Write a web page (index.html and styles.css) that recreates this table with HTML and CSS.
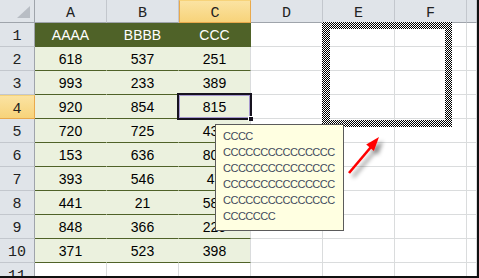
FILE: index.html
```html
<!DOCTYPE html>
<html>
<head>
  <meta charset="utf-8">
  <title>Sheet1</title>
  <link rel="stylesheet" href="styles.css">
</head>
<body>
<div class="sheet">
  <!-- column headers -->
  <div class="row head">
    <div class="cell corner"></div>
    <div class="cell ch">A</div>
    <div class="cell ch">B</div>
    <div class="cell ch on">C</div>
    <div class="cell ch">D</div>
    <div class="cell ch">E</div>
    <div class="cell ch">F</div>
    <div class="cell ch"></div>
  </div>
  <div class="row">
    <div class="cell rh">1</div>
    <div class="cell top">AAAA</div>
    <div class="cell top">BBBB</div>
    <div class="cell top">CCC</div>
    <div class="cell"></div><div class="cell"></div><div class="cell"></div><div class="cell"></div>
  </div>
  <div class="row">
    <div class="cell rh">2</div>
    <div class="cell data">618</div>
    <div class="cell data">537</div>
    <div class="cell data last">251</div>
    <div class="cell"></div><div class="cell"></div><div class="cell"></div><div class="cell"></div>
  </div>
  <div class="row">
    <div class="cell rh">3</div>
    <div class="cell data">993</div>
    <div class="cell data">233</div>
    <div class="cell data last">389</div>
    <div class="cell"></div><div class="cell"></div><div class="cell"></div><div class="cell"></div>
  </div>
  <div class="row">
    <div class="cell rh on">4</div>
    <div class="cell data">920</div>
    <div class="cell data">854</div>
    <div class="cell data last sel">815</div>
    <div class="cell"></div><div class="cell"></div><div class="cell"></div><div class="cell"></div>
  </div>
  <div class="row">
    <div class="cell rh">5</div>
    <div class="cell data">720</div>
    <div class="cell data">725</div>
    <div class="cell data last">437</div>
    <div class="cell"></div><div class="cell"></div><div class="cell"></div><div class="cell"></div>
  </div>
  <div class="row">
    <div class="cell rh">6</div>
    <div class="cell data">153</div>
    <div class="cell data">636</div>
    <div class="cell data last">802</div>
    <div class="cell"></div><div class="cell"></div><div class="cell"></div><div class="cell"></div>
  </div>
  <div class="row">
    <div class="cell rh">7</div>
    <div class="cell data">393</div>
    <div class="cell data">546</div>
    <div class="cell data last">47</div>
    <div class="cell"></div><div class="cell"></div><div class="cell"></div><div class="cell"></div>
  </div>
  <div class="row">
    <div class="cell rh">8</div>
    <div class="cell data">441</div>
    <div class="cell data">21</div>
    <div class="cell data last">585</div>
    <div class="cell"></div><div class="cell"></div><div class="cell"></div><div class="cell"></div>
  </div>
  <div class="row">
    <div class="cell rh">9</div>
    <div class="cell data">848</div>
    <div class="cell data">366</div>
    <div class="cell data last">229</div>
    <div class="cell"></div><div class="cell"></div><div class="cell"></div><div class="cell"></div>
  </div>
  <div class="row">
    <div class="cell rh">10</div>
    <div class="cell data">371</div>
    <div class="cell data">523</div>
    <div class="cell data last">398</div>
    <div class="cell"></div><div class="cell"></div><div class="cell"></div><div class="cell"></div>
  </div>
  <div class="row">
    <div class="cell rh">11</div>
    <div class="cell"></div><div class="cell"></div><div class="cell"></div>
    <div class="cell"></div><div class="cell"></div><div class="cell"></div><div class="cell"></div>
  </div>

  <!-- copy marquee around E1:F4 -->
  <div class="marquee"></div>

  <!-- cell note -->
  <div class="note">
    <div>CCCC</div>
    <div>CCCCCCCCCCCCCCC</div>
    <div>CCCCCCCCCCCCCCC</div>
    <div>CCCCCCCCCCCCCCC</div>
    <div>CCCCCCCCCCCCCCC</div>
    <div>CCCCCCC</div>
  </div>

  <svg class="arrow" width="50" height="56" viewBox="0 0 50 56">
    <defs>
      <filter id="shade" x="-30%" y="-30%" width="160%" height="160%">
        <feDropShadow dx="4" dy="4" stdDeviation="2" flood-color="#000" flood-opacity="0.45"/>
      </filter>
    </defs>
    <g filter="url(#shade)">
      <line x1="9" y1="43" x2="31" y2="17" stroke="#ff0000" stroke-width="2.6"/>
      <polygon points="39,7 33.9,21 26.2,14.5" fill="#ff0000"/>
    </g>
  </svg>
</div>
</body>
</html>
```

FILE: styles.css
```css
:root {
  --grid: #dadcdd;
  --olive: #4f6228;
  --pale: #ebf1de;
}

body {
  margin: 0;
  width: 479px;
  height: 278px;
  background: #101010;
  overflow: hidden;
}

.sheet {
  position: relative;
  width: 477px;
  height: 276px;
  overflow: hidden;
  background: #fff;
  font-family: "Liberation Sans", Arial, sans-serif;
  font-size: 14px;
  color: #000;
}

.row {
  display: grid;
  grid-template-columns: 35px repeat(6, 72px) 1fr;
  height: 24px;
}

.row.head {
  height: 23px;
}

.cell {
  box-sizing: border-box;
  border-right: 1px solid var(--grid);
  border-bottom: 1px solid var(--grid);
  display: flex;
  align-items: center;
  justify-content: center;
  white-space: nowrap;
}

/* headers */
.ch, .rh, .corner {
  background: #e0e4e9;
  color: #222;
  font-family: "Liberation Mono", "Courier New", monospace;
  font-size: 15px;
  border-right-color: #c3c7cd;
  border-bottom-color: #c3c7cd;
}

.ch {
  padding-top: 4px;
  border-bottom-color: #9fa4ab;
}

.rh {
  padding-top: 4px;
  border-right-color: #9fa4ab;
}

.corner {
  position: relative;
  border-bottom-color: #9fa4ab;
  border-right-color: #9fa4ab;
}

.corner::after {
  content: "";
  position: absolute;
  right: 4px;
  bottom: 4px;
  width: 13px;
  height: 12px;
  background: #b8bdc4;
  clip-path: polygon(100% 0, 100% 100%, 0 100%);
}

.ch.on, .rh.on {
  background: linear-gradient(#fbe3a2, #f7d37a);
  border: 1px solid #e9a94c;
  border-top-color: #f7d37a;
}

.rh.on {
  border-left: 0;
}

/* table body */
.top {
  background: var(--olive);
  color: #fff;
  border-right-color: var(--olive);
  border-bottom-color: var(--olive);
}

.data {
  background: var(--pale);
  border-right-color: var(--pale);
  border-bottom-color: var(--olive);
}

.data.last {
  border-right-color: var(--grid);
}

.sel {
  position: relative;
  z-index: 2;
}

.sel::before {
  content: "";
  position: absolute;
  top: -2px;
  left: -2px;
  right: -2px;
  bottom: -2px;
  border: 2px solid #17131f;
  box-shadow: inset 0 0 0 1px #a698cf;
}

.sel::after {
  content: "";
  position: absolute;
  right: -3px;
  bottom: -3px;
  width: 4px;
  height: 4px;
  background: #17131f;
  border: 1px solid #fff;
  border-width: 1px 0 0 1px;
}

/* dotted copy frame */
.marquee {
  position: absolute;
  left: 322px;
  top: 22px;
  width: 130px;
  height: 105px;
  box-sizing: border-box;
  padding: 7px 7px 7px 8px;
  background: repeating-conic-gradient(#000 0 25%, #fff 0 50%) 0 0 / 2px 2px;
  -webkit-mask: linear-gradient(#000 0 0) content-box, linear-gradient(#000 0 0);
  -webkit-mask-composite: xor;
  mask: linear-gradient(#000 0 0) content-box exclude, linear-gradient(#000 0 0);
  z-index: 3;
}

.note {
  position: absolute;
  left: 215px;
  top: 124px;
  width: 129px;
  height: 107px;
  box-sizing: border-box;
  padding: 3px 0 0 7px;
  background: #ffffe1;
  border: 1px solid #5b5b5b;
  font-size: 11px;
  line-height: 16px;
  letter-spacing: -0.5px;
  color: #3f4a5c;
  z-index: 4;
}

.arrow {
  position: absolute;
  left: 340px;
  top: 130px;
  z-index: 5;
}
```
